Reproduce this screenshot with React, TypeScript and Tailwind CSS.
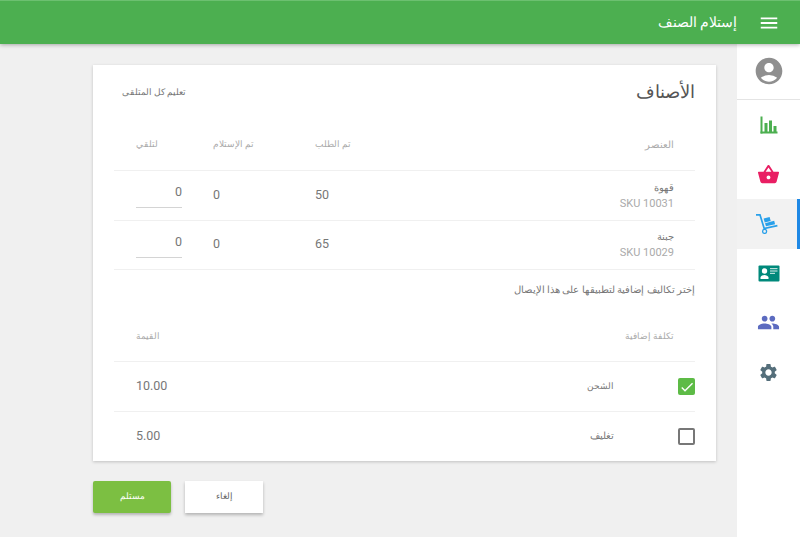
import React from 'react';
import { MdAccountCircle, MdCheck, MdMenu, MdPeople, MdSettings, MdShoppingBasket } from 'react-icons/md';

const ChartIcon = () => (
  <svg width="18" height="18" viewBox="0 0 18 18" fill="#4caf50">
    <rect x="0.5" y="0.5" width="2" height="17" />
    <rect x="0.5" y="15.5" width="17" height="2" />
    <rect x="4.5" y="7" width="3" height="9" />
    <rect x="9" y="4.5" width="3" height="11.5" />
    <rect x="13.5" y="10" width="3" height="6" />
  </svg>
);

const DollyIcon = () => (
  <svg width="22" height="21" viewBox="0 0 22 21" fill="#29a0ea">
    <path d="M0 1h4.6l4.2 13.4 12.4-2.6.4 1.7-14 3L3.4 2.7H0z" />
    <circle cx="8.6" cy="18.4" r="2" fill="none" stroke="#29a0ea" strokeWidth="1.3" />
    <path d="M7.6 5.6l6-1.5 1.1 4-6 1.5z" />
    <path d="M9 10.2l9.2-2.4.9 3.5-9.1 2z" />
  </svg>
);

const CardIcon = () => (
  <svg width="22" height="17" viewBox="0 0 22 17">
    <rect x="0.5" y="0.5" width="21" height="16" rx="1" fill="#00897b" />
    <circle cx="6.5" cy="6" r="2.7" fill="#fff" />
    <path d="M2.5 14v-1.6c0-1.6 2.6-2.5 4-2.5s4 .9 4 2.5V14z" fill="#fff" />
    <rect x="12" y="3" width="7.5" height="1.2" fill="#b7ded9" />
    <rect x="12" y="5.4" width="7.5" height="1.2" fill="#b7ded9" />
    <rect x="12" y="7.8" width="5" height="1.2" fill="#b7ded9" />
  </svg>
);

const sideItems = [
  { icon: <ChartIcon />, active: false },
  { icon: <MdShoppingBasket size={23} color="#e91e63" />, active: false },
  { icon: <DollyIcon />, active: true },
  { icon: <CardIcon />, active: false },
  { icon: <MdPeople size={23} color="#5c6bc0" />, active: false },
  { icon: <MdSettings size={21} color="#546e7a" />, active: false },
];

const items = [
  { name: 'قهوة', sku: 'SKU 10031', ordered: '50' },
  { name: 'جبنة', sku: 'SKU 10029', ordered: '65' },
];

const App = () => {
  return (
    <div
      dir="rtl"
      className="flex h-[537px] w-[800px] flex-col overflow-hidden bg-[#f0f0f0] font-['Roboto',sans-serif]"
    >
      <header className="z-10 flex h-[44px] shrink-0 items-center border-t border-[#6cc070] bg-[#4caf50] text-white shadow-[0_1px_4px_rgba(0,0,0,0.3)]">
        <div className="flex w-[63px] justify-center">
          <MdMenu size={22} />
        </div>
        <span className="text-[14px]">إستلام الصنف</span>
      </header>

      <div className="flex flex-1">
        <aside className="w-[63px] shrink-0 bg-white">
          <div className="flex h-[56px] items-center justify-center pb-[2px] border-b border-[#e4e4e4]">
            <MdAccountCircle size={32} color="#8f8f8f" />
          </div>
          {sideItems.map((item, i) => (
            <div
              key={i}
              className={
                item.active
                  ? 'flex h-[49.5px] items-center justify-center border-r-[3px] border-[#1e88e5] bg-[#f2f2f2]'
                  : 'flex h-[49.5px] items-center justify-center'
              }
            >
              {item.icon}
            </div>
          ))}
        </aside>

        <main className="mr-[21px] w-[623px] pt-[21px]">
          <section className="h-[396px] bg-white px-[21px] shadow-[0_1px_3px_rgba(0,0,0,0.2)]">
            <div className="flex h-[55px] items-center justify-between">
              <h1 className="text-[17.5px] font-normal text-[#555]">الأصناف</h1>
              <button className="ml-[8px] text-[9px] text-[#777]">تعليم كل المتلقى</button>
            </div>

            <div className="grid h-[51px] grid-cols-[1fr_100px_102px_77px] items-center border-b border-[#f0f0f0] pl-[22px] pr-[21px] text-[9px] text-[#aaa]">
              <span className="text-[9.5px]">العنصر</span>
              <span className="justify-self-end">تم الطلب</span>
              <span className="justify-self-end">تم الإستلام</span>
              <span className="justify-self-end">لتلقي</span>
            </div>
            {items.map((item) => (
              <div
                key={item.sku}
                className="grid h-[49.5px] grid-cols-[1fr_100px_102px_77px] items-center border-b border-[#f0f0f0] pl-[22px] pr-[21px] text-[12.5px] text-[#777]"
              >
                <div className="pt-[1px] text-[11px]">
                  <div className="text-[9.5px] leading-[16px] text-[#777]">{item.name}</div>
                  <div dir="ltr" className="text-right leading-[16px] text-[#aaa]">
                    {item.sku}
                  </div>
                </div>
                <span dir="ltr" className="text-left">
                  {item.ordered}
                </span>
                <span dir="ltr" className="text-left">
                  0
                </span>
                <div
                  dir="ltr"
                  className="flex h-[26px] w-[46px] items-start justify-end justify-self-end border-b border-[#d4d4d4] pt-[2px] text-[12.5px] leading-[15px]"
                >
                  0
                </div>
              </div>
            ))}

            <p className="flex h-[41px] items-center text-[9.6px] text-[#777]">
              إختر تكاليف إضافية لتطبيقها على هذا الإيصال
            </p>

            <div className="flex h-[51px] items-center justify-between border-b border-[#f0f0f0] pl-[22px] pr-[21px] pt-[2px] text-[9px] text-[#aaa]">
              <span>تكلفة إضافية</span>
              <span>القيمة</span>
            </div>
            <div className="flex h-[50px] items-center border-b border-[#f0f0f0] pl-[22px] text-[#777]">
              <span className="flex h-[17px] w-[17px] items-center justify-center rounded-[2px] bg-[#5dbb46] text-white">
                <MdCheck size={16} />
              </span>
              <span className="mr-[64px] flex-1 text-[9px]">الشحن</span>
              <span dir="ltr" className="text-[12.5px]">
                10.00
              </span>
            </div>
            <div className="flex h-[50px] items-center pb-[1px] pl-[22px] text-[#777]">
              <span className="h-[17px] w-[17px] rounded-[2px] border-2 border-[#777]" />
              <span className="mr-[64px] flex-1 text-[9.5px]">تغليف</span>
              <span dir="ltr" className="text-[12.5px]">
                5.00
              </span>
            </div>
          </section>

          <div className="mt-[20px] flex justify-end gap-[14px]">
            <button className="h-[32px] w-[78px] bg-white text-[9px] text-[#666] shadow-[0_2px_3px_rgba(0,0,0,0.25)]">
              إلغاء
            </button>
            <button className="h-[32px] w-[78px] rounded-[2px] bg-[#7cbf42] text-[9px] text-white shadow-[0_2px_3px_rgba(0,0,0,0.25)]">
              مستلم
            </button>
          </div>
        </main>
      </div>
    </div>
  );
};

export default App;
